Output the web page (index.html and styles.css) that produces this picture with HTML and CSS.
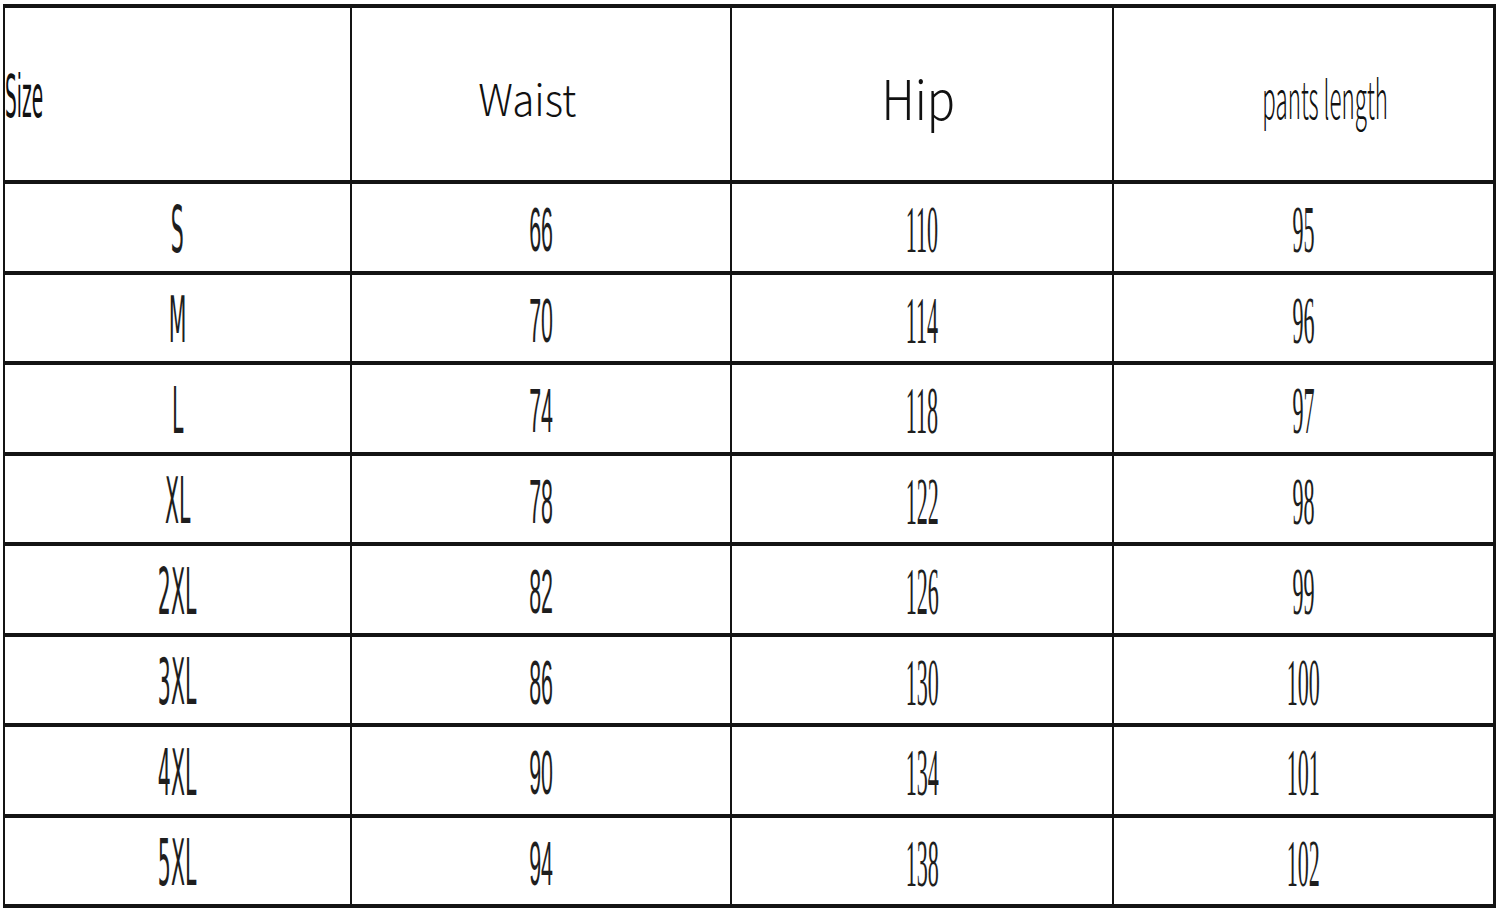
FILE: index.html
```html
<!DOCTYPE html>
<html lang="en">
<head>
<meta charset="utf-8">
<title>Size chart</title>
<link rel="stylesheet" href="styles.css">
</head>
<body>
<div class="chart">
  <div class="cell head head-size"><span class="t-size">Size</span></div>
  <div class="cell head head-waist"><span class="t-waist">Waist</span></div>
  <div class="cell head head-hip"><span class="t-hip">Hip</span></div>
  <div class="cell head head-pants"><span class="t-pants">pants length</span></div>

  <div class="cell"><span class="sz">S</span></div>
  <div class="cell"><span class="nw">66</span></div>
  <div class="cell"><span class="ns">110</span></div>
  <div class="cell"><span class="ns">95</span></div>

  <div class="cell"><span class="sz">M</span></div>
  <div class="cell"><span class="nw">70</span></div>
  <div class="cell"><span class="ns">114</span></div>
  <div class="cell"><span class="ns">96</span></div>

  <div class="cell"><span class="sz">L</span></div>
  <div class="cell"><span class="nw">74</span></div>
  <div class="cell"><span class="ns">118</span></div>
  <div class="cell"><span class="ns">97</span></div>

  <div class="cell"><span class="sz">XL</span></div>
  <div class="cell"><span class="nw">78</span></div>
  <div class="cell"><span class="ns">122</span></div>
  <div class="cell"><span class="ns">98</span></div>

  <div class="cell"><span class="sz">2XL</span></div>
  <div class="cell"><span class="nw">82</span></div>
  <div class="cell"><span class="ns">126</span></div>
  <div class="cell"><span class="ns">99</span></div>

  <div class="cell"><span class="sz">3XL</span></div>
  <div class="cell"><span class="nw">86</span></div>
  <div class="cell"><span class="ns">130</span></div>
  <div class="cell"><span class="ns">100</span></div>

  <div class="cell"><span class="sz">4XL</span></div>
  <div class="cell"><span class="nw">90</span></div>
  <div class="cell"><span class="ns">134</span></div>
  <div class="cell"><span class="ns">101</span></div>

  <div class="cell"><span class="sz">5XL</span></div>
  <div class="cell"><span class="nw">94</span></div>
  <div class="cell"><span class="ns">138</span></div>
  <div class="cell"><span class="ns">102</span></div>
</div>
</body>
</html>
```

FILE: styles.css
```css
html, body {
  margin: 0;
  padding: 0;
  background: #ffffff;
}

.chart {
  display: grid;
  grid-template-columns: 345px 378px 380px 379px;
  grid-template-rows: 172px repeat(8, 86.5px);
  gap: 4px 2px;
  background: #141414;
  padding: 4px 3px 4px 2px;
  margin: 4px 0 0 3px;
  width: fit-content;
}

.cell {
  background: #ffffff;
  display: flex;
  align-items: center;
  justify-content: center;
  color: #1e1e1e;
  padding-top: 5px;
  box-sizing: border-box;
  overflow: hidden;
}

.sz, .nw, .ns, .t-size, .t-waist, .t-hip, .t-pants {
  display: inline-block;
  line-height: 1;
  white-space: nowrap;
}

.sz {
  font-family: "DejaVu Sans", sans-serif;
  font-size: 64px;
  transform: scaleX(0.32);
}

.nw {
  font-family: "Liberation Sans", sans-serif;
  font-size: 63px;
  transform: scaleX(0.34);
}

.ns {
  font-family: "Liberation Serif", serif;
  font-size: 67px;
  transform: scaleX(0.33);
}

.head {
  color: #111111;
}

.head-size {
  justify-content: flex-start;
}

.t-size {
  font-family: "DejaVu Sans", sans-serif;
  font-size: 58px;
  transform: scaleX(0.32);
  transform-origin: left center;
}

.head-waist {
  padding-right: 28px;
}

.t-waist {
  font-family: "Noto Sans CJK SC", "Noto Sans", sans-serif;
  font-weight: 300;
  font-size: 44px;
  transform: scaleX(0.92);
}

.head-hip {
  padding-right: 8px;
}

.t-hip {
  font-family: "Noto Sans CJK SC", "Noto Sans", sans-serif;
  font-weight: 300;
  font-size: 55px;
  transform: scaleX(0.85);
}

.head-pants {
  padding-left: 44px;
}

.t-pants {
  font-family: "Noto Sans CJK SC", "Noto Sans", sans-serif;
  font-weight: 300;
  font-size: 52px;
  transform: scaleX(0.43);
}
```
